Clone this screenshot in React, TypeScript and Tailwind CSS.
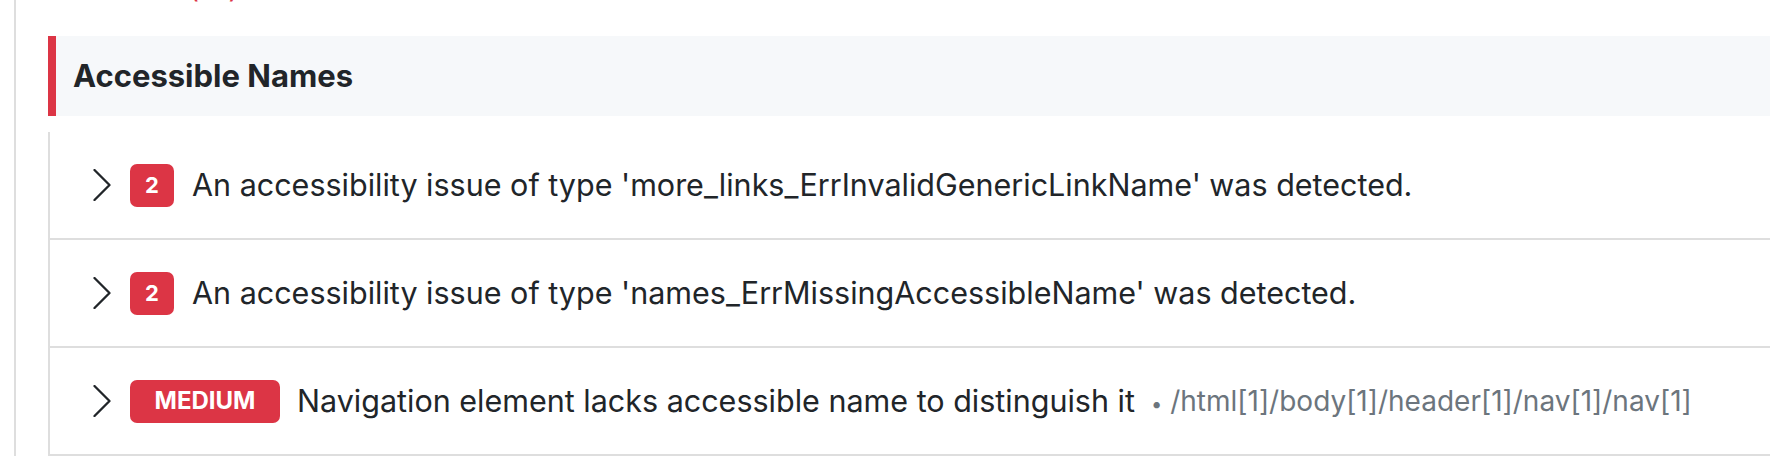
import { ReactNode } from "react";

type Issue = {
  badge: string;
  wide?: boolean;
  text: string;
  path?: string;
};

const issues: Issue[] = [
  { badge: "2", text: "An accessibility issue of type 'more_links_ErrInvalidGenericLinkName' was detected." },
  { badge: "2", text: "An accessibility issue of type 'names_ErrMissingAccessibleName' was detected." },
  {
    badge: "MEDIUM",
    wide: true,
    text: "Navigation element lacks accessible name to distinguish it",
    path: "/html[1]/body[1]/header[1]/nav[1]/nav[1]",
  },
];

function Chevron() {
  return (
    <svg width="18" height="32" viewBox="0 0 18 32" fill="none" className="shrink-0">
      <path d="M1.5 1 L16.5 16 L1.5 31" stroke="#212529" strokeWidth="2.3" strokeLinecap="round" strokeLinejoin="round" />
    </svg>
  );
}

function Badge({ children, wide }: { children: ReactNode; wide?: boolean }) {
  return (
    <span
      className={
        wide
          ? "flex h-[43px] w-[150px] shrink-0 items-center justify-center rounded-[7px] bg-[#dc3545] text-[24px] font-bold text-white"
          : "flex h-[43px] w-[44px] shrink-0 items-center justify-center rounded-[7px] bg-[#dc3545] text-[22px] font-bold text-white"
      }
    >
      {children}
    </span>
  );
}

export default function App() {
  return (
    <div className="h-[460px] overflow-hidden bg-white font-['Inter','Liberation_Sans',sans-serif] text-[#212529]">
      <div className="ml-[14px] border-l-2 border-[#dedede] pl-[32px]">
        <p className="-mt-[29px] mb-[29px] pl-[53px] text-[28px] leading-[36px] text-[#dc3545]">Errors (14)</p>

        <div className="flex h-[80px] items-center border-l-[8px] border-[#dc3545] bg-[#f6f8fa] pl-[17px] text-[31px] font-bold">
          Accessible Names
        </div>

        <div className="mt-[16px] border-l-2 border-[#dedede]">
          {issues.map((issue, i) => (
            <div key={i} className="flex h-[108px] items-center border-b-2 border-[#dedede] pl-[43px]">
              <Chevron />
              <div className="ml-[19px]">
                <Badge wide={issue.wide}>{issue.badge}</Badge>
              </div>
              <span className={issue.wide ? "ml-[17px] text-[30.5px] whitespace-nowrap" : "ml-[18px] text-[30.5px] whitespace-nowrap"}>
                {issue.text}
              </span>
              {issue.path && (
                <span className="ml-[16px] whitespace-nowrap text-[28px] text-[#6c757d]">
                  <span className="mr-[8px] text-[20px]">•</span>
                  {issue.path}
                </span>
              )}
            </div>
          ))}
        </div>
      </div>
    </div>
  );
}
